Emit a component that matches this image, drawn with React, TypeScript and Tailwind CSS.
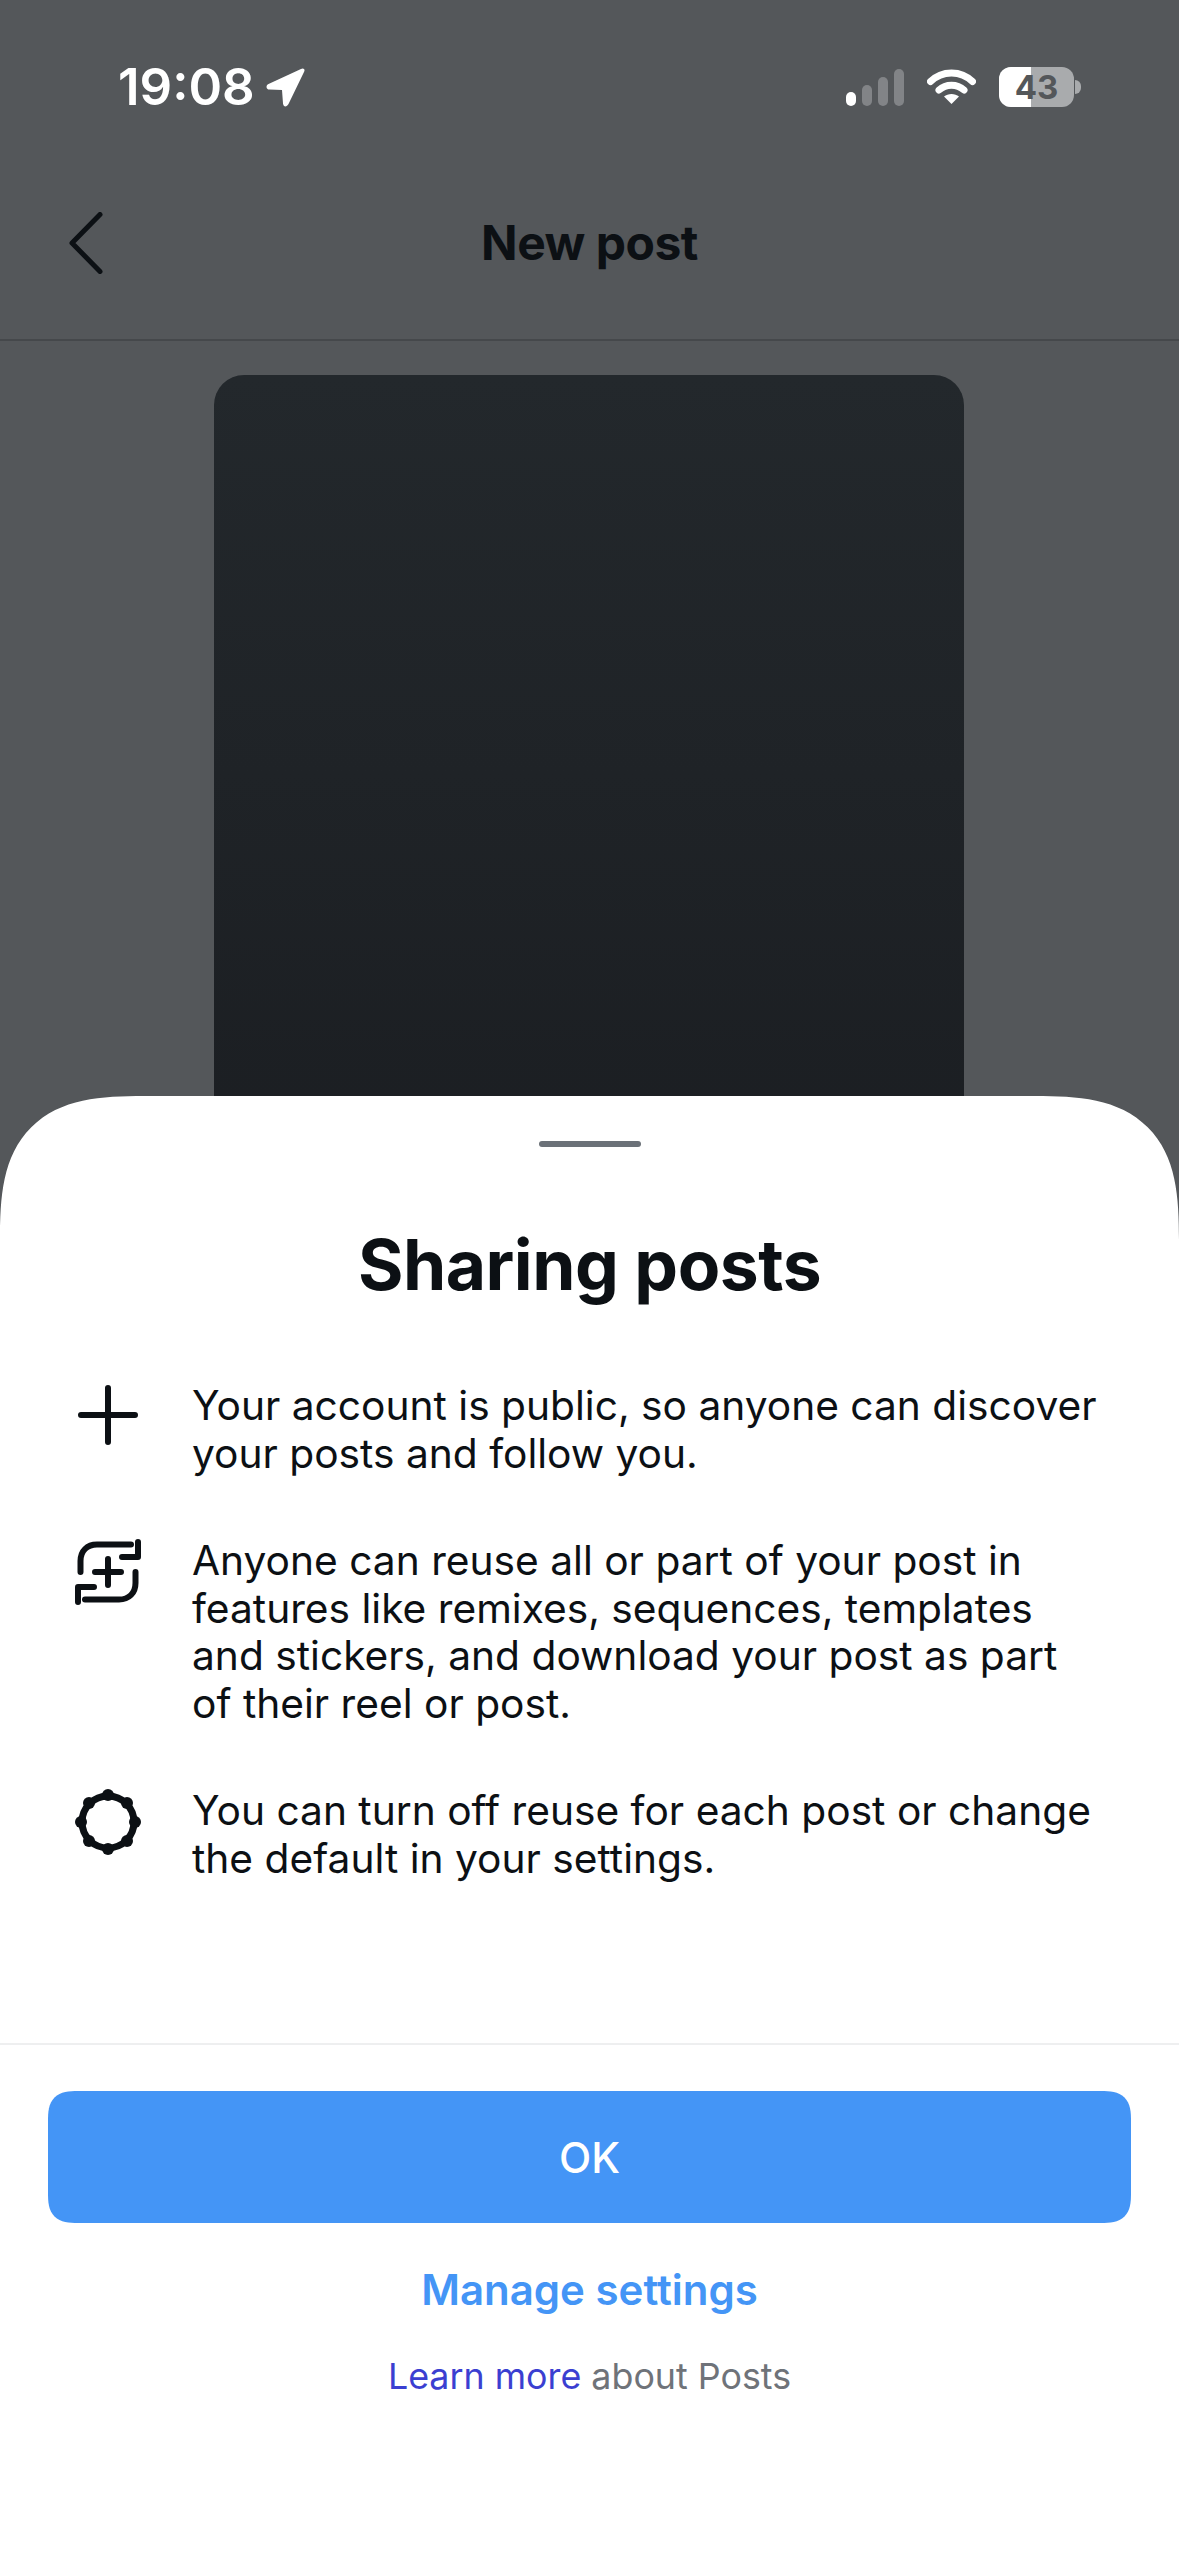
const GEAR_BUMPS = [
  [33, 6],
  [33, 60],
  [6, 33],
  [60, 33],
  [14, 14],
  [52, 14],
  [14, 52],
  [52, 52],
];

export default function App() {
  return (
    <div className="relative flex h-[2556px] w-[1179px] flex-col overflow-hidden bg-[#54575a] font-['Inter',sans-serif]">
      <div className="flex h-[341px] flex-col border-b-2 border-[#45484b]">
        <div className="flex h-[175px] items-start justify-between pl-[118px] pr-[98px] pt-[59px]">
          <div className="flex items-center gap-[11px]">
            <span className="text-[51px] font-semibold leading-[56px] text-white">19:08</span>
            <svg width="39" height="39" viewBox="0 0 39 39" fill="white">
              <path d="M35 1 C37.5 -0.5 39.5 1.5 38 4 L22.500 36 C20.500 39.500 17.500 39 17 35.500 L16 22 L3.500 21.500 C0 21.500 -0.500 17.500 2.500 16 Z" />
            </svg>
          </div>
          <div className="flex items-center pt-[8px]">
            <svg width="58" height="37" viewBox="0 0 58 37">
              <rect x="0" y="23" width="10" height="14" rx="5" fill="white" />
              <rect x="16" y="16" width="10" height="21" rx="5" fill="#828487" />
              <rect x="32" y="8" width="10" height="29" rx="5" fill="#828487" />
              <rect x="48" y="0" width="10" height="37" rx="5" fill="#828487" />
            </svg>
            <svg className="ml-[23px]" width="49" height="36" viewBox="0 0 49 36" fill="none" stroke="white" strokeWidth="7" strokeLinecap="round">
              <path d="M3.500 12.500 C15 1 34 1 45.500 12.500" />
              <path d="M12 21 C19 14.500 30 14.500 37 21" />
              <path d="M24.500 35 L17 27.500 C21 24 28 24 32 27.500 Z" fill="white" stroke="none" />
            </svg>
            <div className="relative ml-[23px] flex h-[40px] w-[75px] items-center justify-center overflow-hidden rounded-[12px] bg-[#a9abad]">
              <div className="absolute left-0 top-0 h-full w-[32px] bg-white" />
              <span className="relative text-[33px] font-bold leading-none text-[#54575a]">43</span>
            </div>
            <div className="ml-[1px] h-[14px] w-[6px] rounded-r-full bg-[#a9abad]" />
          </div>
        </div>
        <div className="relative flex flex-1 items-start justify-center pt-[39px]">
          <svg className="absolute left-[68px] top-[37px]" width="36" height="62" viewBox="0 0 36 62" fill="none" stroke="#0c1014" strokeWidth="5" strokeLinecap="round" strokeLinejoin="round">
            <path d="M32 2.500 L4 31 L32 59.500" />
          </svg>
          <span className="text-[48px] font-bold leading-[58px] tracking-[-0.5px] text-[#0c1014]">New post</span>
        </div>
      </div>

      <div className="flex justify-center pr-[1px] pt-[34px]">
        <div className="h-[800px] w-[750px] rounded-[30px] bg-gradient-to-b from-[#23282c] to-[#1b1e22]" />
      </div>

      <div className="absolute bottom-0 left-0 flex h-[1460px] w-full flex-col rounded-t-[144px] bg-white [corner-shape:superellipse(1.5)]">
        <div className="flex flex-1 flex-col">
          <div className="mx-auto mt-[45px] h-[6px] w-[102px] rounded-full bg-[#6b7178]" />
          <h1 className="mt-[75px] text-center text-[69.5px] font-bold leading-[86px] tracking-[-0.5px] text-[#0c1014]">Sharing posts</h1>
          <div className="mt-[74px] flex flex-col gap-[60px] pl-[75px] pr-[80px]">
            <div className="flex">
              <svg className="h-[66px] w-[66px] shrink-0" viewBox="0 0 66 66" fill="none" stroke="#0c1014" strokeWidth="6" strokeLinecap="round">
                <path d="M33 6 V60 M6 33 H60" />
              </svg>
              <p className="ml-[51px] text-[40.7px] leading-[47.5px] text-[#0c1014]">Your account is public, so anyone can discover your posts and follow you.</p>
            </div>
            <div className="flex">
              <svg className="mt-[2px] h-[66px] w-[66px] shrink-0" viewBox="0 0 66 66" fill="none" stroke="#0c1014" strokeWidth="6" strokeLinecap="round" strokeLinejoin="round">
                <path d="M5.500 33 V22 C5.500 12 12 5.500 22 5.500 H56" />
                <path d="M63 3 V18 H47" />
                <path d="M60.500 33 V44 C60.500 54 54 60.500 44 60.500 H10" />
                <path d="M3 63 V48 H19" />
                <path d="M33 20 V46 M20 33 H46" />
              </svg>
              <p className="ml-[51px] text-[40.7px] leading-[47.5px] text-[#0c1014]">Anyone can reuse all or part of your post in features like remixes, sequences, templates and stickers, and download your post as part of their reel or post.</p>
            </div>
            <div className="flex">
              <svg className="mt-[2px] h-[66px] w-[66px] shrink-0" viewBox="0 0 66 66">
                <circle cx="33" cy="33" r="26" fill="none" stroke="#0c1014" strokeWidth="7" />
                {GEAR_BUMPS.map(([cx, cy]) => (
                  <circle key={`${cx}-${cy}`} cx={cx} cy={cy} r="6" fill="#0c1014" />
                ))}
              </svg>
              <p className="ml-[51px] text-[40.7px] leading-[47.5px] text-[#0c1014]">You can turn off reuse for each post or change the default in your settings.</p>
            </div>
          </div>
        </div>

        <div className="flex h-[513px] flex-col items-center border-t-2 border-[#eeeff0] px-[48px] pt-[46px]">
          <button className="h-[132px] w-full rounded-[30px] bg-[#4495f6] text-[42px] font-medium text-white [corner-shape:superellipse(1.5)]">OK</button>
          <a className="mt-[41px] text-[42px] font-semibold leading-[52px] text-[#4495f6]">Manage settings</a>
          <p className="mt-[38px] text-[35.8px] leading-[44px] text-[#6f7379]">
            <span className="text-[#3b3fd1]">Learn more</span> about Posts
          </p>
        </div>
      </div>
    </div>
  );
}
